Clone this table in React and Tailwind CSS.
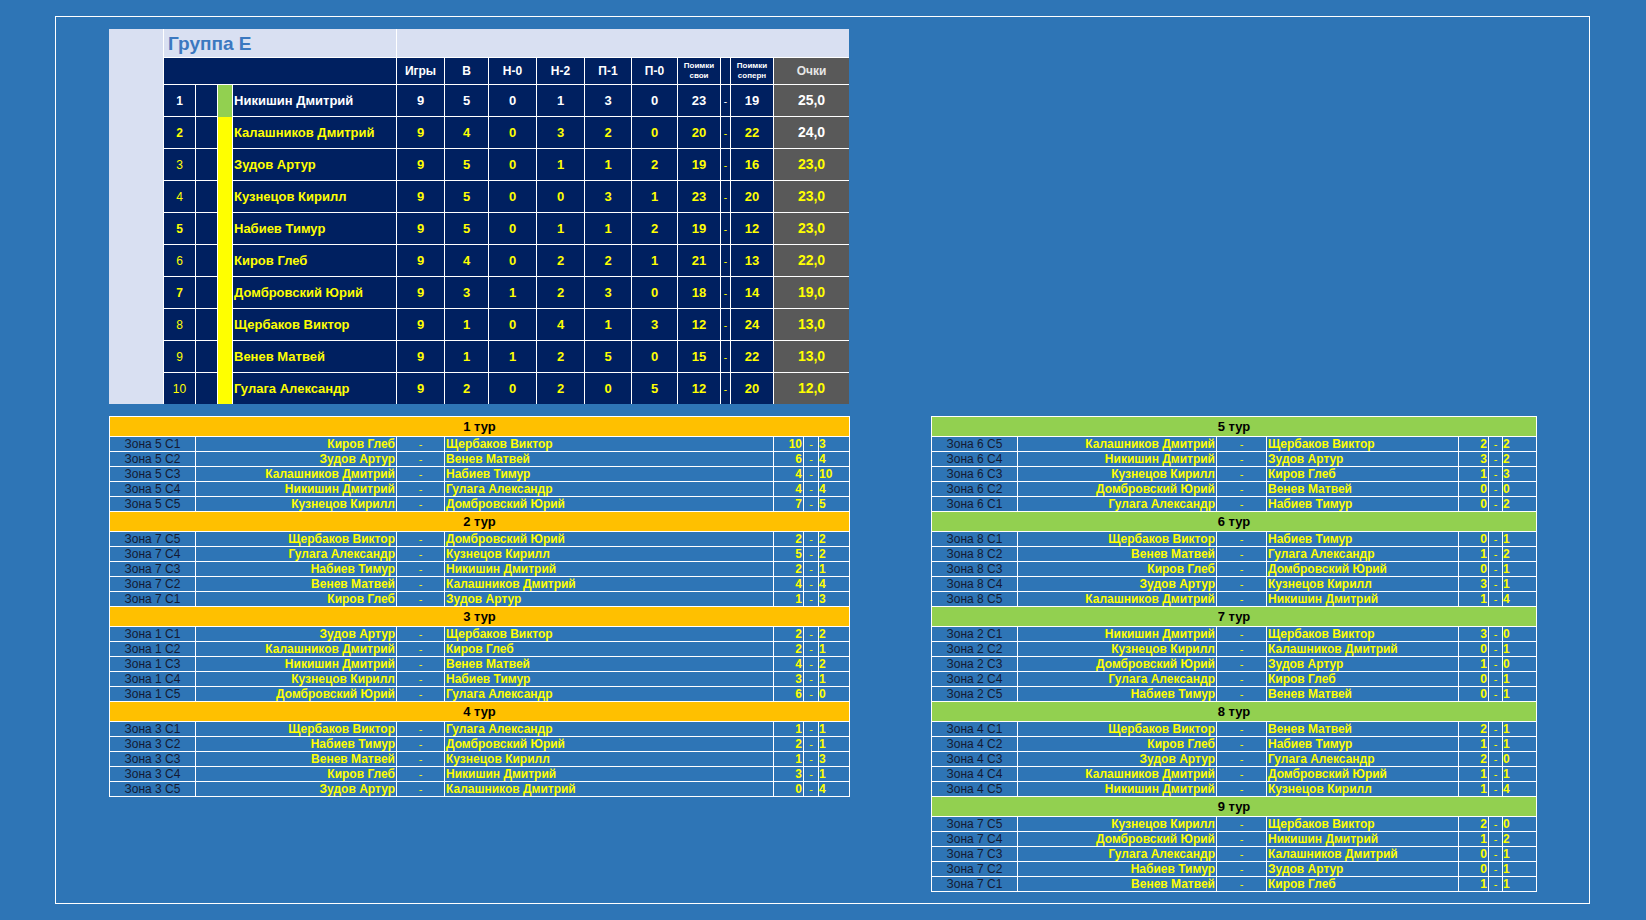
const standings = [
  { n: 1, name: 'Никишин Дмитрий', v: [9, 5, 0, 1, 3, 0], own: 23, opp: 19, pts: '25,0', b: true },
  { n: 2, name: 'Калашников Дмитрий', v: [9, 4, 0, 3, 2, 0], own: 20, opp: 22, pts: '24,0', b: true },
  { n: 3, name: 'Зудов Артур', v: [9, 5, 0, 1, 1, 2], own: 19, opp: 16, pts: '23,0' },
  { n: 4, name: 'Кузнецов Кирилл', v: [9, 5, 0, 0, 3, 1], own: 23, opp: 20, pts: '23,0' },
  { n: 5, name: 'Набиев Тимур', v: [9, 5, 0, 1, 1, 2], own: 19, opp: 12, pts: '23,0', b: true },
  { n: 6, name: 'Киров Глеб', v: [9, 4, 0, 2, 2, 1], own: 21, opp: 13, pts: '22,0' },
  { n: 7, name: 'Домбровский Юрий', v: [9, 3, 1, 2, 3, 0], own: 18, opp: 14, pts: '19,0', b: true },
  { n: 8, name: 'Щербаков Виктор', v: [9, 1, 0, 4, 1, 3], own: 12, opp: 24, pts: '13,0' },
  { n: 9, name: 'Венев Матвей', v: [9, 1, 1, 2, 5, 0], own: 15, opp: 22, pts: '13,0' },
  { n: 10, name: 'Гулага Александр', v: [9, 2, 0, 2, 0, 5], own: 12, opp: 20, pts: '12,0' },
]

const heads = ['Игры', 'В', 'Н-0', 'Н-2', 'П-1', 'П-0']

// [zone, home, away, s1, s2]
const rounds = [
  ['1 тур', [
    ['Зона 5 С1', 'Киров Глеб', 'Щербаков Виктор', 10, 3],
    ['Зона 5 С2', 'Зудов Артур', 'Венев Матвей', 6, 4],
    ['Зона 5 С3', 'Калашников Дмитрий', 'Набиев Тимур', 4, 10],
    ['Зона 5 С4', 'Никишин Дмитрий', 'Гулага Александр', 4, 4],
    ['Зона 5 С5', 'Кузнецов Кирилл', 'Домбровский Юрий', 7, 5],
  ]],
  ['2 тур', [
    ['Зона 7 С5', 'Щербаков Виктор', 'Домбровский Юрий', 2, 2],
    ['Зона 7 С4', 'Гулага Александр', 'Кузнецов Кирилл', 5, 2],
    ['Зона 7 С3', 'Набиев Тимур', 'Никишин Дмитрий', 2, 1],
    ['Зона 7 С2', 'Венев Матвей', 'Калашников Дмитрий', 4, 4],
    ['Зона 7 С1', 'Киров Глеб', 'Зудов Артур', 1, 3],
  ]],
  ['3 тур', [
    ['Зона 1 С1', 'Зудов Артур', 'Щербаков Виктор', 2, 2],
    ['Зона 1 С2', 'Калашников Дмитрий', 'Киров Глеб', 2, 1],
    ['Зона 1 С3', 'Никишин Дмитрий', 'Венев Матвей', 4, 2],
    ['Зона 1 С4', 'Кузнецов Кирилл', 'Набиев Тимур', 3, 1],
    ['Зона 1 С5', 'Домбровский Юрий', 'Гулага Александр', 6, 0],
  ]],
  ['4 тур', [
    ['Зона 3 С1', 'Щербаков Виктор', 'Гулага Александр', 1, 1],
    ['Зона 3 С2', 'Набиев Тимур', 'Домбровский Юрий', 2, 1],
    ['Зона 3 С3', 'Венев Матвей', 'Кузнецов Кирилл', 1, 3],
    ['Зона 3 С4', 'Киров Глеб', 'Никишин Дмитрий', 3, 1],
    ['Зона 3 С5', 'Зудов Артур', 'Калашников Дмитрий', 0, 4],
  ]],
  ['5 тур', [
    ['Зона 6 С5', 'Калашников Дмитрий', 'Щербаков Виктор', 2, 2],
    ['Зона 6 С4', 'Никишин Дмитрий', 'Зудов Артур', 3, 2],
    ['Зона 6 С3', 'Кузнецов Кирилл', 'Киров Глеб', 1, 3],
    ['Зона 6 С2', 'Домбровский Юрий', 'Венев Матвей', 0, 0],
    ['Зона 6 С1', 'Гулага Александр', 'Набиев Тимур', 0, 2],
  ]],
  ['6 тур', [
    ['Зона 8 С1', 'Щербаков Виктор', 'Набиев Тимур', 0, 1],
    ['Зона 8 С2', 'Венев Матвей', 'Гулага Александр', 1, 2],
    ['Зона 8 С3', 'Киров Глеб', 'Домбровский Юрий', 0, 1],
    ['Зона 8 С4', 'Зудов Артур', 'Кузнецов Кирилл', 3, 1],
    ['Зона 8 С5', 'Калашников Дмитрий', 'Никишин Дмитрий', 1, 4],
  ]],
  ['7 тур', [
    ['Зона 2 С1', 'Никишин Дмитрий', 'Щербаков Виктор', 3, 0],
    ['Зона 2 С2', 'Кузнецов Кирилл', 'Калашников Дмитрий', 0, 1],
    ['Зона 2 С3', 'Домбровский Юрий', 'Зудов Артур', 1, 0],
    ['Зона 2 С4', 'Гулага Александр', 'Киров Глеб', 0, 1],
    ['Зона 2 С5', 'Набиев Тимур', 'Венев Матвей', 0, 1],
  ]],
  ['8 тур', [
    ['Зона 4 С1', 'Щербаков Виктор', 'Венев Матвей', 2, 1],
    ['Зона 4 С2', 'Киров Глеб', 'Набиев Тимур', 1, 1],
    ['Зона 4 С3', 'Зудов Артур', 'Гулага Александр', 2, 0],
    ['Зона 4 С4', 'Калашников Дмитрий', 'Домбровский Юрий', 1, 1],
    ['Зона 4 С5', 'Никишин Дмитрий', 'Кузнецов Кирилл', 1, 4],
  ]],
  ['9 тур', [
    ['Зона 7 С5', 'Кузнецов Кирилл', 'Щербаков Виктор', 2, 0],
    ['Зона 7 С4', 'Домбровский Юрий', 'Никишин Дмитрий', 1, 2],
    ['Зона 7 С3', 'Гулага Александр', 'Калашников Дмитрий', 0, 1],
    ['Зона 7 С2', 'Набиев Тимур', 'Зудов Артур', 0, 1],
    ['Зона 7 С1', 'Венев Матвей', 'Киров Глеб', 1, 1],
  ]],
]

function Standings () {
  return (
    <div className="grid w-[740px] grid-cols-[54px_31px_21px_14px_163px_47px_43px_47px_47px_46px_45px_42px_9px_42px_75px] grid-rows-[28px_26px_repeat(10,31px)] gap-px bg-white">
      <div className="col-start-1 row-start-1 row-span-12 bg-[#d9e0f2]" />
      <div className="col-span-4 flex items-end bg-[#d9e0f2] pl-[4px] pb-[2px] text-[19px] leading-[22px] font-bold text-[#3b78c0]">
        Группа E
      </div>
      <div className="col-span-10 bg-[#d9e0f2]" />

      {/* header */}
      <div className="col-span-4 bg-[#002060]" />
      {heads.map(h => (
        <div key={h} className="flex items-center justify-center bg-[#002060] text-[12px] font-bold text-white">{h}</div>
      ))}
      <div className="flex flex-col items-center justify-center bg-[#002060] text-[8px] leading-[10px] font-bold text-white">
        <span>Поимки</span><span>свои</span>
      </div>
      <div className="bg-[#002060]" />
      <div className="flex flex-col items-center justify-center bg-[#002060] text-[8px] leading-[10px] font-bold text-white">
        <span>Поимки</span><span>соперн</span>
      </div>
      <div className="flex items-center justify-center bg-[#595959] text-[12px] font-bold text-[#e6e6e6]">Очки</div>

      {/* colour strip */}
      <div className="col-start-4 row-start-3 row-span-10 flex flex-col">
        <div className="h-[32px] bg-[#92d050]" />
        <div className="flex-1 bg-[#ffff00]" />
      </div>

      {standings.map((r, i) => {
        const c = i === 0 ? 'text-white' : 'text-[#ffff00]'
        const pc = i <= 1 ? 'text-white' : 'text-[#ffff00]'
        const cell = `flex items-center justify-center bg-[#002060] text-[13px] font-bold ${c}`
        return [
          <div key={`r${i}`} className={`flex items-center justify-center bg-[#002060] text-[12px] ${r.b ? 'font-bold' : ''} ${c}`}>{r.n}</div>,
          <div key={`e${i}`} className="bg-[#002060]" />,
          <div key={`n${i}`} className={`flex items-center bg-[#002060] pl-[1px] text-[13px] font-bold ${c}`}>{r.name}</div>,
          ...r.v.map((v, j) => <div key={`v${i}-${j}`} className={cell}>{v}</div>),
          <div key={`o${i}`} className={cell}>{r.own}</div>,
          <div key={`d${i}`} className={`flex items-end justify-center bg-[#002060] pb-[7px] text-[10px] ${c}`}>-</div>,
          <div key={`p${i}`} className={cell}>{r.opp}</div>,
          <div key={`t${i}`} className={`flex items-center justify-center bg-[#595959] text-[14px] font-bold ${pc}`}>{r.pts}</div>,
        ]
      })}
    </div>
  )
}

function Fixtures ({ items, head, cols }) {
  return (
    <div className={`grid ${cols} gap-px bg-white p-px`}>
      {items.map(([title, games]) => [
        <div key={title} className={`col-span-7 flex h-[19px] items-center justify-center ${head} text-[13px] font-bold text-black`}>
          {title}
        </div>,
        ...games.map(([zone, home, away, s1, s2]) => [
          <div key={`${title}${zone}z`} className="h-[14px] bg-[#2e75b6] text-center text-[12px] leading-[14px] text-[#141a33]">{zone}</div>,
          <div key={`${title}${zone}h`} className="bg-[#2e75b6] pr-[1px] text-right text-[12px] leading-[14px] font-bold text-[#ffff00]">{home}</div>,
          <div key={`${title}${zone}d`} className="bg-[#2e75b6] text-center text-[11px] leading-[14px] text-[#ffff00]">-</div>,
          <div key={`${title}${zone}a`} className="bg-[#2e75b6] pl-[1px] text-[12px] leading-[14px] font-bold text-[#ffff00]">{away}</div>,
          <div key={`${title}${zone}s`} className="bg-[#2e75b6] pr-[1px] text-right text-[12px] leading-[14px] font-bold text-[#ffff00]">{s1}</div>,
          <div key={`${title}${zone}x`} className="bg-[#2e75b6] text-center text-[11px] leading-[14px] text-[#ffff00]">-</div>,
          <div key={`${title}${zone}t`} className="bg-[#2e75b6] text-[12px] leading-[14px] font-bold text-[#ffff00]">{s2}</div>,
        ]),
      ])}
    </div>
  )
}

export default function App () {
  return (
    <div className="min-h-[920px] bg-[#2e75b6] pt-[16px] pl-[55px] font-['Liberation_Sans',Arial,sans-serif]">
      <div className="h-[888px] w-[1535px] border border-white pt-[12px] pl-[53px]">
        <Standings />
        <div className="mt-[12px] flex items-start gap-[81px]">
          <Fixtures
            items={rounds.slice(0, 4)}
            head="bg-[#ffc000]"
            cols="grid-cols-[85px_200px_47px_328px_29px_14px_30px]"
          />
          <Fixtures
            items={rounds.slice(4)}
            head="bg-[#92d050]"
            cols="grid-cols-[85px_198px_49px_191px_29px_13px_33px]"
          />
        </div>
      </div>
    </div>
  )
}
